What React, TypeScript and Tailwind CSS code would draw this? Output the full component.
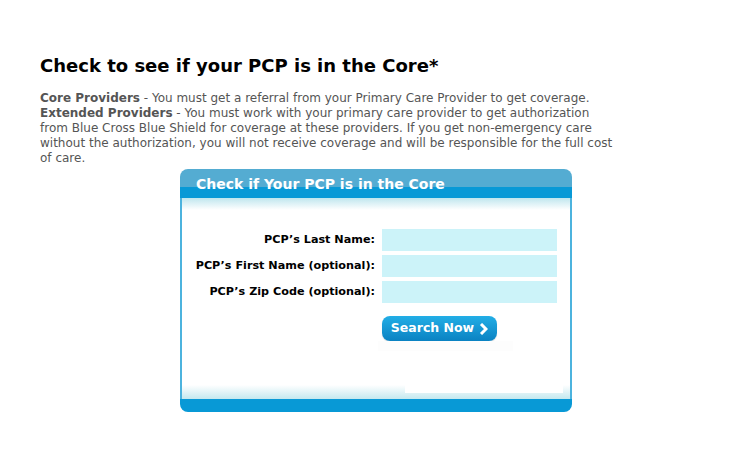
import React from 'react';

const font = { fontFamily: 'Verdana, "DejaVu Sans", sans-serif' };

const Field = ({ label }: { label: string }) => (
    <div className="flex items-center">
        <label className="w-[200px] whitespace-nowrap pr-[7px] text-right text-[11.2px] font-bold text-black">{label}</label>
        <input className="h-[22px] w-[175px] bg-[#ccf3f9] outline-none" />
    </div>
);

export default function App() {
    return (
        <div className="min-h-[475px] w-[743px] bg-white text-[12px]" style={font}>
            <div className="pl-[40px] pt-[54px]">
                <h1 className="text-[18px] font-bold leading-[24px] text-black">Check to see if your PCP is in the Core*</h1>
                <div className="mt-[13px] w-[580px] leading-[15px] text-[#555555]">
                    <p>
                        <b>Core Providers</b> - You must get a referral from your Primary Care Provider to get coverage.
                    </p>
                    <p>
                        <b>Extended Providers</b> - You must work with your primary care provider to get authorization from Blue Cross Blue
                        Shield for coverage at these providers. If you get non-emergency care without the authorization, you will not receive
                        coverage and will be responsible for the full cost of care.
                    </p>
                </div>
            </div>

            {/* search box */}
            <div className="ml-[180px] mt-[3px] w-[392px] overflow-hidden rounded-[8px]">
                <div className="h-[18px] bg-[#54acd2]" />
                <div className="relative h-[11px] bg-[#0899d6]">
                    <span className="absolute left-[16px] top-[-12px] text-[14px] font-bold leading-[18px] text-white">
                        Check if Your PCP is in the Core
                    </span>
                </div>
                <div className="border-x-2 border-[#4cb3de] bg-white">
                    <div className="h-[12px] bg-gradient-to-b from-[#bfe6ee] to-white" />
                    <div className="flex flex-col gap-[4px] pt-[19px]">
                        <Field label="PCP’s Last Name:" />
                        <Field label="PCP’s First Name (optional):" />
                        <Field label="PCP’s Zip Code (optional):" />
                    </div>
                    <div className="ml-[200px] mt-[13px] flex h-[25px] w-[115px] items-center justify-center gap-[5px] rounded-[8px] bg-gradient-to-b from-[#22aee6] to-[#0a82c2] shadow-[0_1px_1px_rgba(0,0,0,0.15)]">
                        <span className="text-[12.5px] font-bold text-white">Search Now</span>
                        <svg width="9" height="12" viewBox="0 0 9 12">
                            <path d="M2 1 L7 6 L2 11" fill="none" stroke="#fff" strokeWidth="3" strokeLinejoin="miter" />
                        </svg>
                    </div>
                    <div className="ml-[196px] h-[10px] w-[135px] bg-[#fdfdfd]" />
                    <div className="h-[34px]" />
                    <div className="h-[14px] bg-gradient-to-b from-white to-[#c4e8ef]">
                        <div className="ml-[223px] h-[8px] w-[158px] bg-white" />
                    </div>
                </div>
                <div className="h-[13px] bg-[#0899d6]" />
            </div>
        </div>
    );
}
